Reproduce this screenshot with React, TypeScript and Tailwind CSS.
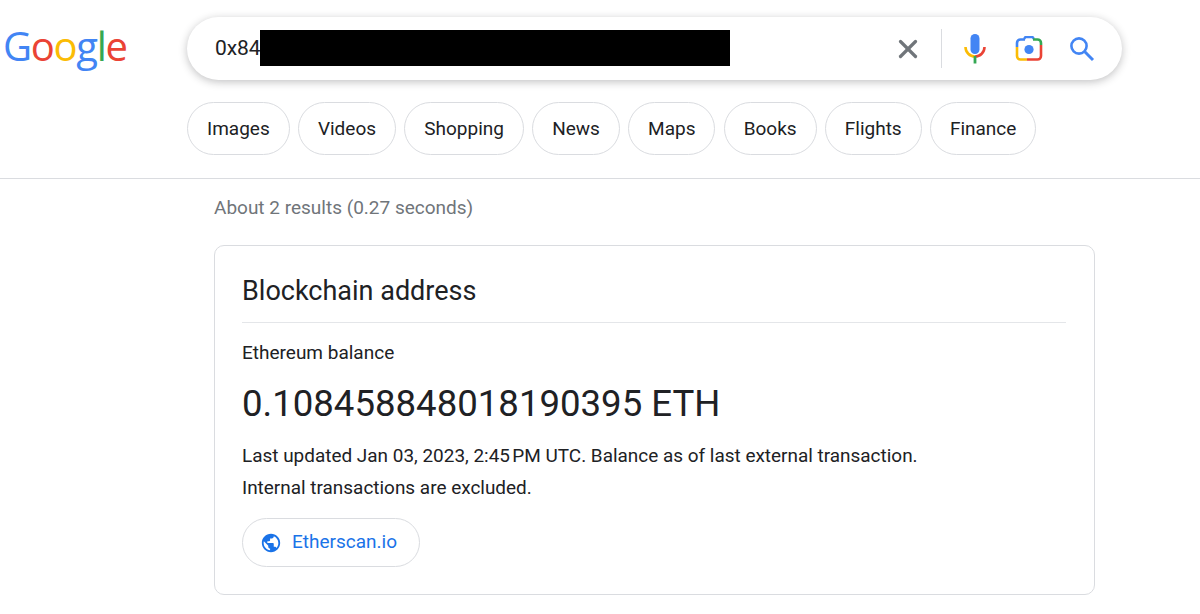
import { X } from "lucide-react";

const chips = ["Images", "Videos", "Shopping", "News", "Maps", "Books", "Flights", "Finance"];

function GoogleLogo() {
  return (
    <div className="w-[187px] shrink-0 pl-[3px] pt-[1px] text-[40px] leading-[56px] font-medium tracking-[-1.3px] font-['Open_Sans',sans-serif]">
      <span className="text-[#4285f4]">G</span>
      <span className="text-[#ea4335]">o</span>
      <span className="text-[#fbbc05]">o</span>
      <span className="text-[#4285f4]">g</span>
      <span className="text-[#34a853]">l</span>
      <span className="text-[#ea4335]">e</span>
    </div>
  );
}

function MicIcon() {
  return (
    <svg width="24" height="30" viewBox="0 0 24 30" fill="none">
      <rect x="7.5" y="0" width="9" height="20" rx="4.5" fill="#4285f4" />
      <path d="M2.5 13 a9.5 9.5 0 0 0 9.5 9.5" stroke="#fbbc05" strokeWidth="2.6" />
      <path d="M21.5 13 a9.5 9.5 0 0 1 -9.5 9.5" stroke="#ea4335" strokeWidth="2.6" />
      <path d="M12 22 v7.5" stroke="#34a853" strokeWidth="2.8" />
    </svg>
  );
}

function LensIcon() {
  return (
    <svg width="28" height="26" viewBox="0 0 28 26" fill="none">
      <path d="M9 3 L10.5 1 H17.5 L19 3" stroke="#4285f4" strokeWidth="2.4" />
      <path d="M2 11 V7 a3.5 3.5 0 0 1 3.5 -3.5 H10" stroke="#4285f4" strokeWidth="2.6" />
      <path d="M18 3.5 H22.5 a3.5 3.5 0 0 1 3.5 3.5 V9" stroke="#34a853" strokeWidth="2.6" />
      <path d="M2 11 V20 a3.5 3.5 0 0 0 3.5 3.5 H12" stroke="#fbbc05" strokeWidth="2.6" />
      <path d="M12 23.5 H22.5 a3.5 3.5 0 0 0 3.5 -3.5 V9" stroke="#ea4335" strokeWidth="2.6" />
      <circle cx="14" cy="13.5" r="4.6" fill="#4285f4" />
    </svg>
  );
}

function SearchIcon() {
  return (
    <svg width="26" height="26" viewBox="0 0 26 26" fill="none" stroke="#4285f4">
      <circle cx="10" cy="10" r="7.6" strokeWidth="2.6" />
      <path d="M15.8 15.8 L24 24" strokeWidth="3" />
    </svg>
  );
}

function GlobeIcon() {
  return (
    <svg width="22" height="22" viewBox="0 0 24 24" fill="#1a73e8">
      <path d="M12 2C6.48 2 2 6.48 2 12s4.48 10 10 10 10-4.48 10-10S17.52 2 12 2zm-1 17.93c-3.95-.49-7-3.85-7-7.93 0-.62.08-1.21.21-1.79L9 15v1c0 1.1.9 2 2 2v1.93zm6.9-2.54c-.26-.81-1-1.39-1.9-1.39h-1v-3c0-.55-.45-1-1-1H8v-2h2c.55 0 1-.45 1-1V7h2c1.1 0 2-.9 2-2v-.41c2.93 1.19 5 4.06 5 7.41 0 2.08-.8 3.97-2.1 5.39z" />
    </svg>
  );
}

export default function App() {
  return (
    <div className="h-[614px] w-[1200px] overflow-hidden bg-white font-['Roboto',sans-serif] text-[#202124]">
      <header className="flex h-[102px] pt-[17px]">
        <GoogleLogo />
        <div className="flex h-[63px] w-[935px] items-center rounded-full bg-white pl-[28px] pr-[27px] shadow-[0_2px_9px_rgba(32,33,36,0.28)]">
          <span className="text-[21px] tracking-[-0.1px]">0x84</span>
          <div className="mb-[2px] h-[36px] w-[470px] bg-black" />
          <div className="ml-auto flex items-center">
            <X size={30} strokeWidth={2.6} className="text-[#70757a]" />
            <div className="ml-[18px] mr-[21px] h-[39px] w-px bg-[#dadce0]" />
            <MicIcon />
            <div className="w-[28px]" />
            <LensIcon />
            <div className="w-[26px]" />
            <SearchIcon />
          </div>
        </div>
      </header>

      <nav className="flex h-[77px] gap-[8.2px] border-b border-[#dadce0] pl-[187px]">
        {chips.map((c) => (
          <div
            key={c}
            className="flex h-[53px] items-center rounded-full border border-[#dadce0] px-[19px] pt-[1px] text-[19px] text-[#202124]"
          >
            {c}
          </div>
        ))}
      </nav>

      <main className="pl-[214px]">
        <p className="mt-[17px] text-[19px] leading-[24px] text-[#70757a]">About 2 results (0.27 seconds)</p>
        <section className="mt-[25px] h-[350px] w-[881px] rounded-[10px] border border-[#dadce0] pl-[27px] pr-[28px]">
          <h2 className="border-b border-[#e4e6e9] pb-[13px] pt-[27px] text-[27px] leading-[36px]">Blockchain address</h2>
          <p className="mt-[18px] text-[19px] leading-[24px]">Ethereum balance</p>
          <p className="mt-[15px] text-[36.6px] leading-[48px]">0.108458848018190395 ETH</p>
          <p className="mt-[12px] text-[18.95px] leading-[32px]">
            Last updated Jan 03, 2023, 2:45{"\u202f"}PM UTC. Balance as of last external transaction.
            <br />
            Internal transactions are excluded.
          </p>
          <a className="mt-[14px] flex h-[49px] w-[178px] items-center gap-[10px] rounded-full border border-[#dadce0] pl-[17px] text-[19px] text-[#1a73e8]">
            <GlobeIcon />
            Etherscan.io
          </a>
        </section>
      </main>
    </div>
  );
}
